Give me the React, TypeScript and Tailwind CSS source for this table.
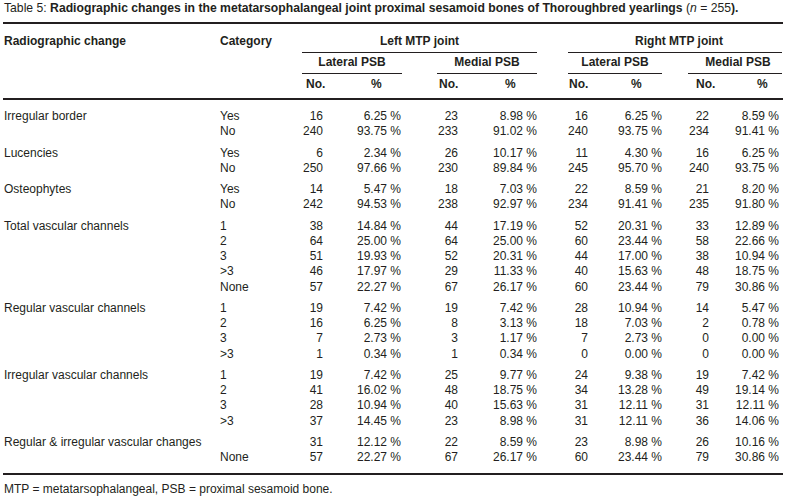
type Row = [string, number, string, number, string, number, string, number, string];

type Group = {
  label: string;
  rows: Row[];
};

const groups: Group[] = [
  {
    label: "Irregular border",
    rows: [
      ["Yes", 16, "6.25", 23, "8.98", 16, "6.25", 22, "8.59"],
      ["No", 240, "93.75", 233, "91.02", 240, "93.75", 234, "91.41"],
    ],
  },
  {
    label: "Lucencies",
    rows: [
      ["Yes", 6, "2.34", 26, "10.17", 11, "4.30", 16, "6.25"],
      ["No", 250, "97.66", 230, "89.84", 245, "95.70", 240, "93.75"],
    ],
  },
  {
    label: "Osteophytes",
    rows: [
      ["Yes", 14, "5.47", 18, "7.03", 22, "8.59", 21, "8.20"],
      ["No", 242, "94.53", 238, "92.97", 234, "91.41", 235, "91.80"],
    ],
  },
  {
    label: "Total vascular channels",
    rows: [
      ["1", 38, "14.84", 44, "17.19", 52, "20.31", 33, "12.89"],
      ["2", 64, "25.00", 64, "25.00", 60, "23.44", 58, "22.66"],
      ["3", 51, "19.93", 52, "20.31", 44, "17.00", 38, "10.94"],
      [">3", 46, "17.97", 29, "11.33", 40, "15.63", 48, "18.75"],
      ["None", 57, "22.27", 67, "26.17", 60, "23.44", 79, "30.86"],
    ],
  },
  {
    label: "Regular vascular channels",
    rows: [
      ["1", 19, "7.42", 19, "7.42", 28, "10.94", 14, "5.47"],
      ["2", 16, "6.25", 8, "3.13", 18, "7.03", 2, "0.78"],
      ["3", 7, "2.73", 3, "1.17", 7, "2.73", 0, "0.00"],
      [">3", 1, "0.34", 1, "0.34", 0, "0.00", 0, "0.00"],
    ],
  },
  {
    label: "Irregular vascular channels",
    rows: [
      ["1", 19, "7.42", 25, "9.77", 24, "9.38", 19, "7.42"],
      ["2", 41, "16.02", 48, "18.75", 34, "13.28", 49, "19.14"],
      ["3", 28, "10.94", 40, "15.63", 31, "12.11", 31, "12.11"],
      [">3", 37, "14.45", 23, "8.98", 31, "12.11", 36, "14.06"],
    ],
  },
  {
    label: "Regular & irregular vascular changes",
    rows: [
      ["", 31, "12.12", 22, "8.59", 23, "8.98", 26, "10.16"],
      ["None", 57, "22.27", 67, "26.17", 60, "23.44", 79, "30.86"],
    ],
  },
];

function DataRow({ label, row }: { label: string; row: Row }) {
  const [cat, n1, p1, n2, p2, n3, p3, n4, p4] = row;
  return (
    <div className="flex leading-[15.2px] whitespace-nowrap">
      <div className="w-[217px] pl-px">{label}</div>
      <div className="w-[82px]">{cat}</div>
      <div className="w-[21px] text-right">{n1}</div>
      <div className="w-[79px] text-right pr-px">{p1} %</div>
      <div className="w-[35px]" />
      <div className="w-[21px] text-right">{n2}</div>
      <div className="w-[79px] text-right">{p2} %</div>
      <div className="w-[31px]" />
      <div className="w-[20px] text-right">{n3}</div>
      <div className="w-[74px] text-right">{p3} %</div>
      <div className="w-[26px]" />
      <div className="w-[21px] text-right">{n4}</div>
      <div className="w-[73px] text-right pr-[3px]">{p4} %</div>
    </div>
  );
}

export default function App() {
  return (
    <div className="w-[787px] h-[498px] bg-white text-[#231f20] text-[12px] font-['Liberation_Sans',Arial,sans-serif] overflow-hidden">
      <div className="pl-[4px] pt-[1px] leading-[15px] whitespace-nowrap text-[12.2px]">
        Table 5:{" "}
        <span className="font-bold">
          Radiographic changes in the metatarsophalangeal joint proximal sesamoid bones of Thoroughbred yearlings
        </span>{" "}
        <span>(</span>
        <span className="italic">n</span>
        <span> = 255</span>
        <span className="font-bold">).</span>
      </div>

      <div className="ml-[3px] w-[780px] mt-[6px]">
        {/* header */}
        <div className="border-t-[2.5px] border-[#231f20] font-bold whitespace-nowrap leading-[15px]">
          <div className="flex">
            <div className="w-[217px] pl-px pt-[10px]">Radiographic change</div>
            <div className="w-[82px] pt-[10px]">Category</div>
            <div className="w-[235px] pt-[10px] pb-[3px] border-b border-[#231f20] text-center">Left MTP joint</div>
            <div className="w-[31px]" />
            <div className="w-[214px] pt-[10px] pb-[3px] border-b border-[#231f20] text-center pl-[8px]">Right MTP joint</div>
          </div>
          <div className="flex">
            <div className="w-[299px]" />
            <div className="w-[100px] pt-[2px] pb-[3px] border-b border-[#231f20] text-center">Lateral PSB</div>
            <div className="w-[35px]" />
            <div className="w-[100px] pt-[2px] pb-[3px] border-b border-[#231f20] text-center">Medial PSB</div>
            <div className="w-[31px]" />
            <div className="w-[94px] pt-[2px] pb-[3px] border-b border-[#231f20] text-center">Lateral PSB</div>
            <div className="w-[26px]" />
            <div className="w-[94px] pt-[2px] pb-[3px] border-b border-[#231f20] text-center pl-[6px]">Medial PSB</div>
          </div>
          <div className="flex pt-[3px] pb-[6px] border-b-2 border-[#231f20]">
            <div className="w-[299px]" />
            <div className="w-[100px] flex">
              <span className="w-[69px] pl-[4px]">No.</span>
              <span>%</span>
            </div>
            <div className="w-[35px]" />
            <div className="w-[100px] flex">
              <span className="w-[68px] pl-[2px]">No.</span>
              <span>%</span>
            </div>
            <div className="w-[31px]" />
            <div className="w-[94px] flex">
              <span className="w-[63px] pl-px">No.</span>
              <span>%</span>
            </div>
            <div className="w-[26px]" />
            <div className="w-[94px] flex">
              <span className="w-[69px] pl-[8px]">No.</span>
              <span>%</span>
            </div>
          </div>
        </div>

        {/* body */}
        <div className="pt-[9px] pb-[8px] border-b-2 border-[#231f20] flex flex-col gap-[6.2px]">
          {groups.map((g) => (
            <div key={g.label}>
              {g.rows.map((r, i) => (
                <DataRow key={i} label={i === 0 ? g.label : ""} row={r} />
              ))}
            </div>
          ))}
        </div>

        <div className="mt-[7px] pl-px leading-[15px]">
          MTP = metatarsophalangeal, PSB = proximal sesamoid bone.
        </div>
      </div>
    </div>
  );
}
